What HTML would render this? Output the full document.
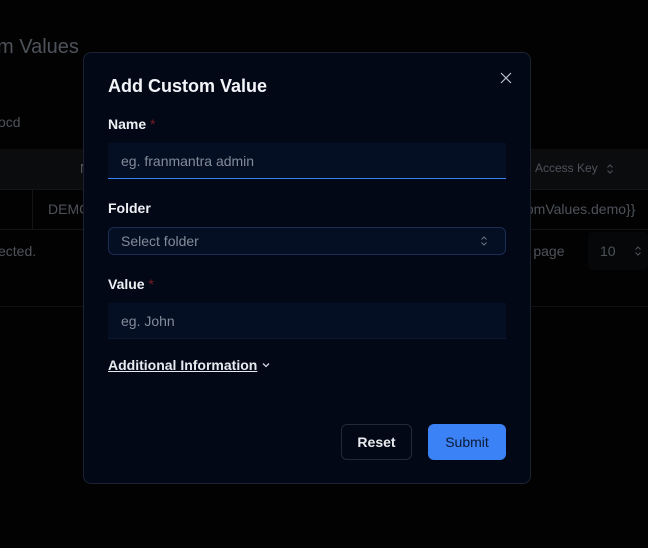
<!DOCTYPE html>
<html><head><meta charset="utf-8"><style>
*{box-sizing:border-box;margin:0;padding:0}
body{width:648px;height:548px;background:#020203;font-family:"Liberation Sans",sans-serif;position:relative;overflow:hidden;color:#555a62}
.a{position:absolute;white-space:nowrap}
.modal{position:absolute;left:83px;top:52px;width:448px;height:432px;background:#030817;border:1px solid #1c2230;border-radius:8px}
.lbl{position:absolute;left:24px;color:#eef0f4;font-size:14px;font-weight:bold}
.req{color:#7a1c22;font-weight:normal}
.inp{position:absolute;left:24px;width:398px;height:36px;background:#050f24;color:#848c9a;font-size:14px;padding-left:13px;line-height:36px}
</style></head><body>
<div class="a" style="left:-3px;top:36px;font-size:20px;color:#4e535a">m Values</div>
<div class="a" style="left:-2px;top:114px;font-size:14px;color:#4e535a">ocd</div>
<div class="a" style="left:0;top:149px;width:648px;height:40px;background:#0b0c0e"></div>
<div class="a" style="left:0;top:189px;width:648px;height:1px;background:#141518"></div>
<div class="a" style="left:0;top:229px;width:648px;height:1px;background:#141518"></div>
<div class="a" style="left:0;top:306px;width:648px;height:1px;background:#101114"></div>
<div class="a" style="left:32px;top:190px;width:1px;height:39px;background:#141518"></div>
<div class="a" style="left:80px;top:161px;font-size:13px">N</div>
<div class="a" style="left:535px;top:161px;font-size:12px;color:#4e535a">Access Key</div>
<svg class="a" style="left:606px;top:163px" width="8" height="12" viewBox="0 0 8 12"><path d="M1.5 4.5L4 2L6.5 4.5M1.5 7.5L4 10L6.5 7.5" stroke="#4e535a" fill="none"/></svg>
<div class="a" style="left:48px;top:201px;font-size:14px;color:#4e535a">DEMO</div>
<div class="a" style="left:522px;top:201px;font-size:14px;color:#4e535a">tomValues.demo}}</div>
<div class="a" style="left:-2px;top:243px;font-size:14px;color:#4e535a">ected.</div>
<div class="a" style="left:517px;top:243px;font-size:14px;color:#4e535a">er page</div>
<div class="a" style="left:588px;top:232px;width:60px;height:38px;background:#060708;border-radius:4px"></div>
<div class="a" style="left:600px;top:243px;font-size:14px;color:#4e535a">10</div>
<svg class="a" style="left:634px;top:245px" width="8" height="12" viewBox="0 0 8 12"><path d="M1.5 4.5L4 2L6.5 4.5M1.5 7.5L4 10L6.5 7.5" stroke="#4e535a" fill="none"/></svg>
<div class="modal">
 <div class="a" style="left:24px;top:23px;font-size:18px;font-weight:bold;color:#f2f4f7">Add Custom Value</div>
 <svg class="a" style="left:416px;top:19px" width="12" height="12" viewBox="0 0 12 12"><path d="M1 1L11 11M11 1L1 11" stroke="#b8bec8" stroke-width="1.2"/></svg>
 <div class="lbl" style="top:63px">Name <span class="req">*</span></div>
 <div class="inp" style="top:90px;border-bottom:1px solid #3b82f6">eg. franmantra admin</div>
 <div class="lbl" style="top:147px">Folder</div>
 <div class="inp" style="top:174px;height:28px;line-height:26px;border:1px solid #1c2c52;border-radius:6px;padding-left:12px">Select folder</div>
 <svg class="a" style="left:396px;top:182px" width="8" height="12" viewBox="0 0 8 12"><path d="M1.5 4.5L4 2L6.5 4.5M1.5 7.5L4 10L6.5 7.5" stroke="#6a7282" fill="none"/></svg>
 <div class="lbl" style="top:223px">Value <span class="req">*</span></div>
 <div class="inp" style="top:250px;border-bottom:1px solid #0d1830">eg. John</div>
 <div class="a" style="left:24px;top:304px;font-size:14px;font-weight:bold;color:#e6e9ee;text-decoration:underline">Additional Information</div>
 <svg class="a" style="left:177px;top:307px" width="10" height="10" viewBox="0 0 10 10"><path d="M2 3.5L5 6.5L8 3.5" stroke="#d0d4da" stroke-width="1.3" fill="none"/></svg>
 <div class="a" style="left:257px;top:371px;width:71px;height:36px;border:1px solid #23293a;border-radius:6px;color:#e8eaee;font-size:14px;font-weight:bold;text-align:center;line-height:34px">Reset</div>
 <div class="a" style="left:344px;top:371px;width:78px;height:36px;background:#3b82f6;border-radius:6px;color:#0c1a36;font-size:14px;text-align:center;line-height:36px">Submit</div>
</div>
</body></html>
